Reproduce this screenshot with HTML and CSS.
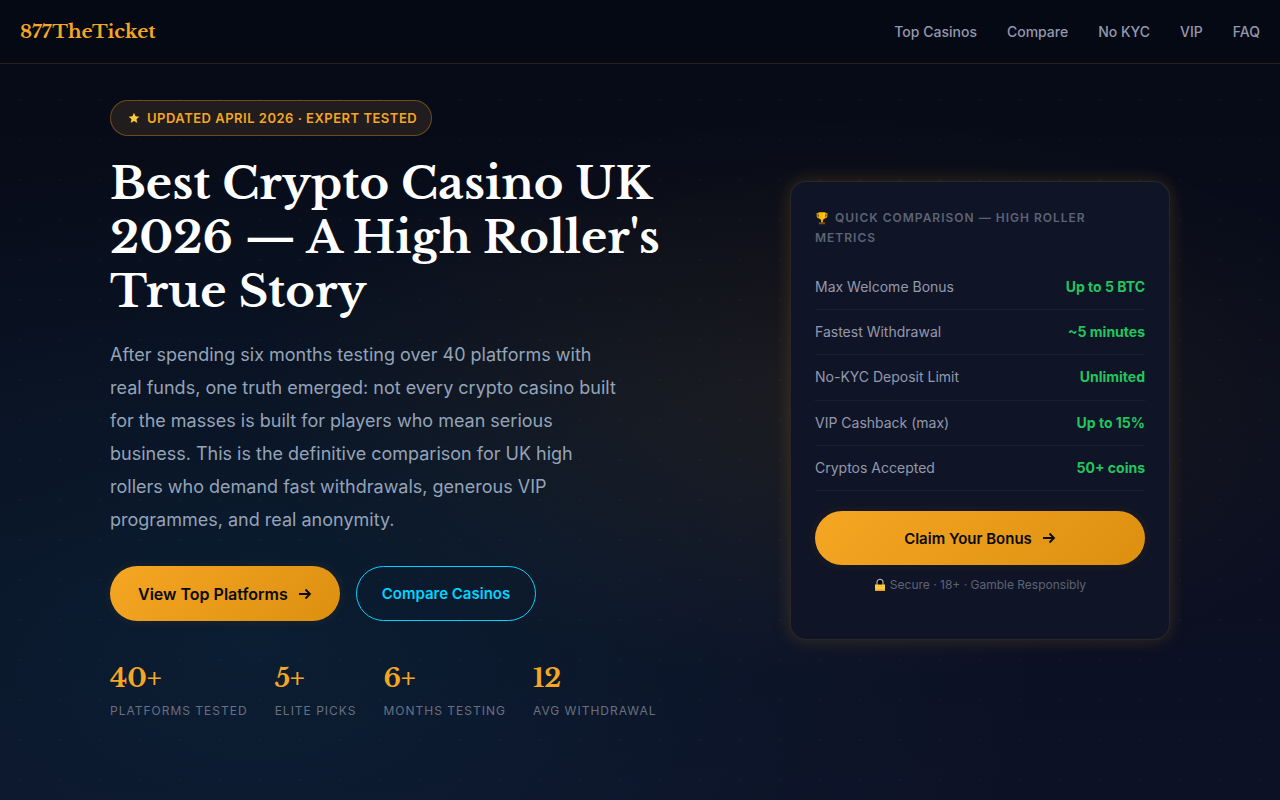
FILE: index.html
```html
<!DOCTYPE html>
<html lang="en">
<head>
<meta charset="utf-8">
<meta name="viewport" content="width=device-width, initial-scale=1">
<title>877TheTicket</title>
<link rel="stylesheet" href="styles.css">
</head>
<body>
<header class="nav">
  <a class="logo" href="#">877TheTicket</a>
  <nav class="links">
    <a href="#top">Top Casinos</a>
    <a href="#compare">Compare</a>
    <a href="#nokyc">No KYC</a>
    <a href="#vip">VIP</a>
    <a href="#faq">FAQ</a>
  </nav>
</header>
<main class="hero">
  <section class="intro">
    <p class="badge">
      <svg class="star" viewBox="0 0 14 14" aria-hidden="true"><path d="M7 .8l1.800 4.100 4.500.4-3.400 3 1 4.400L7 10.400l-3.900 2.300 1-4.400-3.400-3 4.500-.4z" fill="#ffc83d" stroke="#0a0a0a" stroke-width=".7"/></svg>
      <span>Updated April 2026 · Expert Tested</span>
    </p>
    <h1>Best Crypto Casino UK 2026 — A High Roller's True Story</h1>
    <p class="lead">After spending six months testing over 40 platforms with real funds, one truth emerged: not every crypto casino built for the masses is built for players who mean serious business. This is the definitive comparison for UK high rollers who demand fast withdrawals, generous VIP programmes, and real anonymity.</p>
    <div class="actions">
      <a class="btn gold" href="#top">View Top Platforms
        <svg class="arrow" viewBox="0 0 14 14" aria-hidden="true"><path d="M1 7h11M7.500 2.500L12 7l-4.500 4.500"/></svg></a>
      <a class="btn outline" href="#compare">Compare Casinos</a>
    </div>
    <dl class="stats">
      <div><dd>40+</dd><dt>Platforms Tested</dt></div>
      <div><dd>5+</dd><dt>Elite Picks</dt></div>
      <div><dd>6+</dd><dt>Months Testing</dt></div>
      <div><dd>12</dd><dt>Avg Withdrawal</dt></div>
    </dl>
  </section>
  <aside class="card">
    <h2><svg class="trophy" viewBox="0 0 16 16" aria-hidden="true"><path d="M4.500 3H2.500v2.200c0 1.600.8 2.600 2.500 2.600M11.500 3h2v2.200c0 1.600-.8 2.600-2.500 2.600" fill="none" stroke="#d99a08" stroke-width="1.300"/><path d="M4 1.500h8v4.300c0 2.300-1.400 4-3 4.200v3H7v-3C5.400 9.800 4 8.100 4 5.800z" fill="#ffb800"/><path d="M9.500 2.500h1.300v4.200l-1.300 1z" fill="#ffe08a"/><path d="M4.500 13h7v2.200h-7z" fill="#8a4b12"/></svg>Quick Comparison — High Roller Metrics</h2>
    <dl class="metrics">
      <div><dt>Max Welcome Bonus</dt><dd>Up to 5 BTC</dd></div>
      <div><dt>Fastest Withdrawal</dt><dd>~5 minutes</dd></div>
      <div><dt>No-KYC Deposit Limit</dt><dd>Unlimited</dd></div>
      <div><dt>VIP Cashback (max)</dt><dd>Up to 15%</dd></div>
      <div><dt>Cryptos Accepted</dt><dd>50+ coins</dd></div>
    </dl>
    <a class="btn gold claim" href="#claim">Claim Your Bonus
      <svg class="arrow" viewBox="0 0 14 14" aria-hidden="true"><path d="M1 7h11M7.500 2.500L12 7l-4.500 4.500"/></svg></a>
    <p class="note"><svg class="lock" viewBox="0 0 12 14" aria-hidden="true"><path d="M3 7V4.300a3 3 0 0 1 6 0V7" fill="#000" stroke="#a9a9ab" stroke-width="1.200"/><path d="M1 6.500h10v6.500H1z" fill="#ffc83d"/><path d="M1 11.500h10V13H1z" fill="#e5a526"/></svg>Secure · 18+ · Gamble Responsibly</p>
  </aside>
</main>
</body>
</html>
```
FILE: styles.css
```css
* { box-sizing: border-box; margin: 0; }

body {
  min-height: 100vh;
  font-family: Inter, "Liberation Sans", sans-serif;
  color: #94a3b8;
  background:
    radial-gradient(circle at 20px 20px, rgba(255, 255, 255, 0.03) 1px, transparent 1px) 0 0 / 40px 40px,
    radial-gradient(ellipse at 20% 80%, rgba(0, 212, 255, 0.07), transparent 55%),
    radial-gradient(ellipse at 65% 50%, rgba(245, 166, 35, 0.08), transparent 50%),
    linear-gradient(180deg, #060a15, #0d1126);
}

a { color: inherit; text-decoration: none; }

.nav {
  display: flex;
  justify-content: space-between;
  align-items: center;
  height: 64px;
  padding: 0 20px;
  background: rgba(5, 9, 20, 0.9);
  border-bottom: 1px solid rgba(245, 166, 35, 0.15);
}

.logo, h1, .stats dd {
  font-family: "Libre Baskerville", "Liberation Serif", serif;
  font-weight: 700;
}

.logo { font-size: 19px; color: #f5a623; }

.links {
  display: flex;
  gap: 30px;
  font-size: 14px;
  font-weight: 500;
  color: #9498ad;
}

.hero {
  display: grid;
  grid-template-columns: 1fr 380px;
  gap: 120px;
  align-items: center;
  max-width: 1100px;
  margin: 0 auto;
  padding: 36px 20px 80px;
}

.badge {
  display: inline-flex;
  align-items: center;
  gap: 6px;
  height: 36px;
  padding: 0 14px 0 16px;
  border: 1px solid rgba(245, 166, 35, 0.35);
  border-radius: 18px;
  background: #211c1d;
  color: #f5a623;
  font-size: 13px;
  font-weight: 600;
  letter-spacing: 0.5px;
  text-transform: uppercase;
}

.star { width: 14px; height: 14px; }

h1 {
  margin-top: 20px;
  color: #fff;
  font-size: 45px;
  line-height: 54px;
}

.lead {
  max-width: 512px;
  margin-top: 20px;
  font-size: 18px;
  line-height: 33px;
}

.actions { display: flex; gap: 16px; margin-top: 30px; }

.btn {
  display: flex;
  align-items: center;
  justify-content: center;
  gap: 10px;
  min-height: 55px;
  padding: 0 28px;
  border-radius: 28px;
  font-size: 16px;
  font-weight: 600;
}

.gold {
  color: #0a0a0a;
  background: linear-gradient(135deg, #f5a623, #dd8f10);
  box-shadow: 0 0 4px 5px rgba(245, 166, 35, 0.03);
}

.outline {
  padding: 0 25px;
  border: 1px solid #00d4ff;
  color: #00d4ff;
  font-size: 15px;
}

.claim { min-height: 54px; font-size: 15px; }

.arrow {
  width: 14px;
  height: 14px;
  fill: none;
  stroke: currentColor;
  stroke-width: 1.8;
}

.stats { display: flex; gap: 27px; margin-top: 40px; }
.stats dd { color: #f5a623; font-size: 26px; line-height: 34px; }
.stats dt {
  margin-top: 6px;
  color: #697082;
  font-size: 12px;
  line-height: 20px;
  letter-spacing: 1px;
  text-transform: uppercase;
}

.card {
  padding: 26px 24px 44px;
  border: 1px solid rgba(245, 166, 35, 0.12);
  border-radius: 16px;
  background: #0f1526;
  box-shadow: 0 0 18px rgba(245, 166, 35, 0.18);
}

h2 {
  color: #5d6375;
  font-size: 12px;
  font-weight: 600;
  line-height: 20px;
  letter-spacing: 1px;
  text-transform: uppercase;
}

.trophy { width: 14px; height: 14px; margin-right: 6px; vertical-align: -3px; }

.metrics { margin: 17px 0 20px; }
.metrics div {
  display: flex;
  justify-content: space-between;
  padding: 11px 0;
  border-bottom: 1px solid rgba(255, 255, 255, 0.05);
  font-size: 14px;
  line-height: 1.6;
}
.metrics dt { color: #9498ad; }
.metrics dd { color: #22c55e; font-weight: 700; }

.note {
  display: flex;
  align-items: center;
  justify-content: center;
  gap: 4px;
  margin-top: 10px;
  color: #5d6375;
  font-size: 12px;
  line-height: 20px;
}

.lock { width: 12px; height: 14px; }

@media (max-width: 900px) {
  .hero { grid-template-columns: 1fr; gap: 60px; }
  .actions, .stats, .links { flex-wrap: wrap; }
}
```
